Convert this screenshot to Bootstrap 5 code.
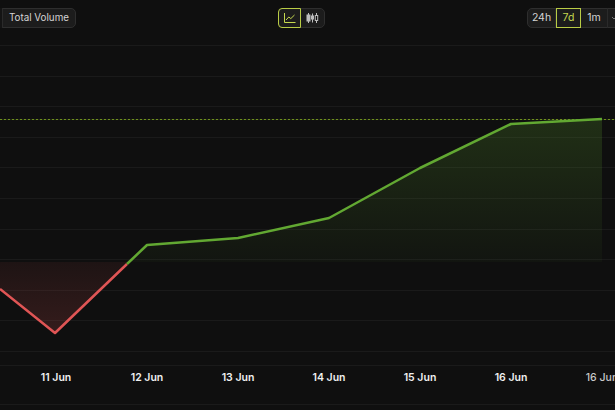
<!DOCTYPE html>
<html lang="en">
<head>
  <meta charset="UTF-8">
  <meta name="viewport" content="width=device-width, initial-scale=1.0">
  <title>Total Volume</title>
  <link href="https://cdn.jsdelivr.net/npm/bootstrap@5.3.3/dist/css/bootstrap.min.css" rel="stylesheet">
  <style>
    html, body { background: #0f0f0f; overflow: hidden; }
    body { width: 615px; height: 410px; font-family: Inter, "Liberation Sans", sans-serif; }
    .chart-bar { height: 40px; padding-top: 8px; }
    .tool-group { display: flex; height: 20px; background: #1c1c1c; border: 1px solid #2e2e2e; border-radius: 5px; flex: none; }
    .tool-item { display: flex; align-items: center; justify-content: center; height: 20px; margin-top: -1px; padding: 0; color: #d4d4d4; font-size: 10.5px; line-height: 1; border-right: 1px solid #2a2a2a; }
    .tool-item:last-child { border-right: 0; }
    .tool-item.is-on { border: 1px solid #b9cc45; color: #c5d84e; }
    .group-left { margin-left: -20px; width: 96px; }
    .group-left .stub { width: 22px; background: #141414; }
    .group-left .vol { flex: 1; font-size: 9.8px; }
    .group-mid { width: 47px; margin-left: 202px; }
    .group-mid .tool-item { width: 24px; }
    .group-mid .is-on { width: 23px; border-radius: 4px 0 0 4px; margin-left: -1px; }
    .group-right { width: 110px; margin-left: auto; margin-right: -22px; }
    .group-right .w-24 { width: 28px; }
    .group-right .w-7 { width: 25px; }
    .group-right .w-1 { width: 27px; }
    .group-right .stub { justify-content: flex-start; padding-left: 3px; }
    .axis-label { font-family: Inter, "Liberation Sans", sans-serif; font-size: 10.5px; font-weight: 600; fill: #f0f0f0; text-anchor: middle; }
    .axis-label.dim { font-weight: 500; fill: #c9c9c9; }
    .grid-line { stroke: #1a1a1a; stroke-width: 1; }
  </style>
</head>
<body>
<div class="d-flex chart-bar">
  <div class="tool-group group-left">
    <div class="tool-item stub"></div>
    <div class="tool-item vol">Total Volume</div>
  </div>
  <div class="tool-group group-mid">
    <div class="tool-item is-on">
      <svg width="13" height="12" viewBox="0 0 13 12" fill="none" stroke="#c5d84e" stroke-width="1"><path d="M1.500 1v9.500H12.500"/><path d="M3 8l2.800-3 2 1.600L11.500 3"/></svg>
    </div>
    <div class="tool-item">
      <svg width="13" height="12" viewBox="0 0 13 12" fill="none" stroke="#bdbdbd" stroke-width="1"><path d="M2.500 1v10M6.500 1.500v9M10.500 1v10"/><rect x="1" y="3" width="3" height="6" fill="#bdbdbd"/><rect x="5.500" y="4" width="2" height="3" fill="#bdbdbd"/><rect x="9.300" y="3.500" width="2.400" height="5" fill="#0f0f0f"/></svg>
    </div>
  </div>
  <div class="tool-group group-right">
    <div class="tool-item w-24">24h</div>
    <div class="tool-item w-7 is-on">7d</div>
    <div class="tool-item w-1">1m</div>
    <div class="tool-item stub flex-grow-1">
      <svg width="6" height="6" viewBox="0 0 6 6" fill="none" stroke="#777" stroke-width="1"><path d="M1 2l2 2 2-2"/></svg>
    </div>
  </div>
</div>

<svg class="d-block" width="615" height="370" viewBox="0 40 615 370">
  <defs>
    <linearGradient id="fillUp" gradientUnits="userSpaceOnUse" x1="0" y1="119" x2="0" y2="262">
      <stop offset="0" stop-color="#5fa32f" stop-opacity=".22"/>
      <stop offset="1" stop-color="#5fa32f" stop-opacity=".04"/>
    </linearGradient>
    <linearGradient id="fillDown" gradientUnits="userSpaceOnUse" x1="0" y1="262" x2="0" y2="333">
      <stop offset="0" stop-color="#e25555" stop-opacity=".07"/>
      <stop offset="1" stop-color="#e25555" stop-opacity=".18"/>
    </linearGradient>
  </defs>

  <path class="grid-line" d="M0 45.500H615M0 76.500H615M0 106.500H615M0 137.500H615M0 167.500H615M0 198.500H615M0 229.500H615M0 259.500H615M0 290.500H615M0 320.500H615M0 351.500H615M0 365.500H615M0 404.500H615"/>

  <path d="M129 262L147 245L238 238L329 218L420 168L511 124L602 119V262Z" fill="url(#fillUp)"/>
  <path d="M0 262V289L55 333L129 262Z" fill="url(#fillDown)"/>

  <path d="M0 119.500H615" stroke="#232a14" stroke-width="1"/>
  <path d="M0 119.500H615" stroke="#6f8f1e" stroke-width="1" stroke-dasharray="2 2"/>

  <path d="M0 289L55 333L127 264" fill="none" stroke="#e05555" stroke-width="2.500" stroke-linejoin="round"/>
  <path d="M127 264L147 245L238 238L329 218L420 168L511 124L602 119" fill="none" stroke="#62a832" stroke-width="2.500" stroke-linejoin="round"/>

  <text class="axis-label" x="56" y="381">11 Jun</text>
  <text class="axis-label" x="147" y="381">12 Jun</text>
  <text class="axis-label" x="238" y="381">13 Jun</text>
  <text class="axis-label" x="329" y="381">14 Jun</text>
  <text class="axis-label" x="420" y="381">15 Jun</text>
  <text class="axis-label" x="511" y="381">16 Jun</text>
  <text class="axis-label dim" x="602" y="381">16 Jun</text>
</svg>

<script src="https://cdn.jsdelivr.net/npm/bootstrap@5.3.3/dist/js/bootstrap.bundle.min.js"></script>
</body>
</html>
